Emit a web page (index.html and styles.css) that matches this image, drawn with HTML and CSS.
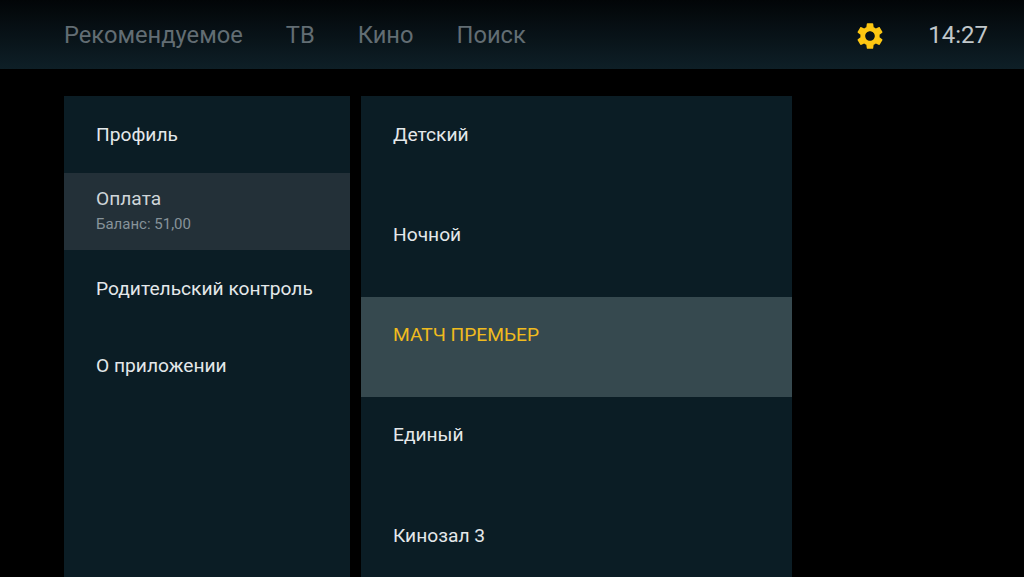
FILE: index.html
```html
<!DOCTYPE html>
<html lang="ru">

<head>
    <meta charset="UTF-8" />
    <title>Настройки</title>
    <link rel="stylesheet" href="styles.css">
</head>

<body>
    <header class="topbar">
        <nav class="tabs">
            <a href="#">Рекомендуемое</a>
            <a href="#">ТВ</a>
            <a href="#">Кино</a>
            <a href="#">Поиск</a>
        </nav>
        <svg class="gear" viewBox="0 0 24 24" aria-label="Настройки">
            <path d="M19.14 12.94c.04-.3.06-.61.06-.94 0-.32-.02-.64-.07-.94l2.03-1.58c.18-.14.23-.41.12-.61l-1.92-3.32c-.12-.22-.37-.29-.59-.22l-2.39.96c-.5-.38-1.03-.7-1.62-.94l-.36-2.54c-.04-.24-.24-.41-.48-.41h-3.84c-.24 0-.43.17-.47.41l-.36 2.54c-.59.24-1.13.57-1.62.94l-2.39-.96c-.22-.08-.47 0-.59.22L2.74 8.87c-.12.21-.08.47.12.61l2.03 1.58c-.05.3-.09.63-.09.94s.02.64.07.94l-2.03 1.58c-.18.14-.23.41-.12.61l1.92 3.32c.12.22.37.29.59.22l2.39-.96c.5.38 1.03.7 1.62.94l.36 2.54c.05.24.24.41.48.41h3.84c.24 0 .44-.17.47-.41l.36-2.54c.59-.24 1.13-.56 1.62-.94l2.39.96c.22.08.47 0 .59-.22l1.92-3.32c.12-.22.07-.47-.12-.61l-2.01-1.58zM12 15.6c-1.98 0-3.6-1.62-3.6-3.6s1.62-3.6 3.6-3.6 3.6 1.62 3.6 3.6-1.62 3.6-3.6 3.6z" />
        </svg>
        <div class="clock">14:27</div>
    </header>

    <main class="content">
        <ul class="panel side">
            <li>Профиль</li>
            <li class="current">
                Оплата
                <small>Баланс: 51,00</small>
            </li>
            <li>Родительский контроль</li>
            <li>О приложении</li>
        </ul>
        <ul class="panel plans">
            <li>Детский</li>
            <li>Ночной</li>
            <li class="selected">МАТЧ ПРЕМЬЕР</li>
            <li>Единый</li>
            <li>Кинозал 3</li>
        </ul>
    </main>
</body>

</html>
```

FILE: styles.css
```css
/* Reset & base */
* {
    margin: 0;
    padding: 0;
    box-sizing: border-box;
}

html,
body {
    height: 100%;
    overflow: hidden;
}

body {
    background-color: #000;
    color: #e4e8ea;
    font-family: Roboto, 'Liberation Sans', sans-serif;
}

/* Top bar */
.topbar {
    height: 69px;
    padding: 0 36px 0 64px;
    display: flex;
    align-items: center;
    background: linear-gradient(to bottom, #020507, #0e1f27);
}

.tabs {
    display: flex;
    gap: 43px;
    flex-grow: 1;
}

.tabs a {
    color: #626d73;
    font-size: 23.7px;
    text-decoration: none;
}

.gear {
    width: 32px;
    height: 32px;
    margin: 2px 42.5px 0 0;
    fill: #fdc712;
}

.clock {
    color: #c0c7ca;
    font-size: 24px;
}

/* Panels */
.content {
    display: flex;
    gap: 11px;
    height: 508px;
    padding: 27px 0 0 64px;
}

.panel {
    list-style: none;
    background-color: #0b1d25;
    font-size: 19.2px;
}

.side {
    width: 286px;
}

.side li {
    height: 77px;
    padding: 28px 32px 0;
    line-height: 22px;
}

.side li.current {
    padding-top: 15px;
    background-color: #233038;
    color: #cfd5d8;
}

.side small {
    display: block;
    margin-top: 5px;
    font-size: 15px;
    line-height: 18px;
    color: #87939a;
}

.plans {
    width: 431px;
}

.plans li {
    height: 100.3px;
    padding: 27.5px 32px 0;
    line-height: 22px;
}

.plans li.selected {
    background-color: #36494f;
    color: #f0bb1e;
}
```
